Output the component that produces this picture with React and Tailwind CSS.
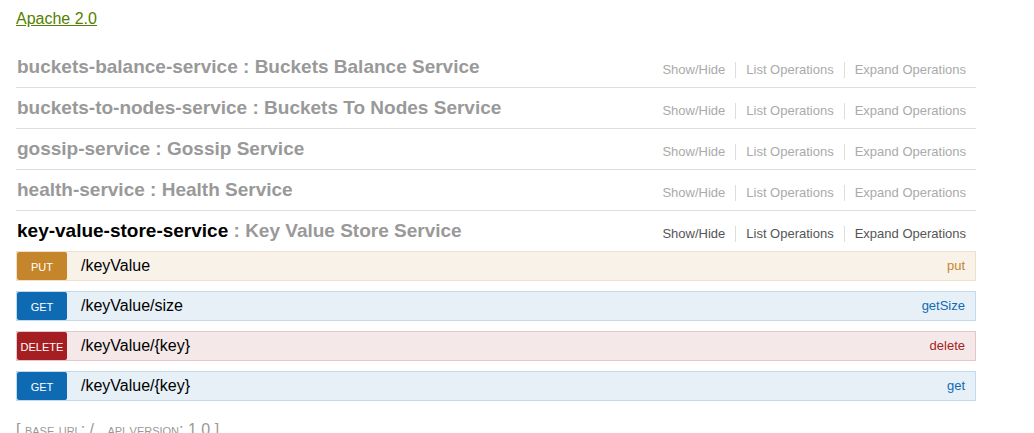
const services = [
  { name: "buckets-balance-service", title: "Buckets Balance Service" },
  { name: "buckets-to-nodes-service", title: "Buckets To Nodes Service" },
  { name: "gossip-service", title: "Gossip Service" },
  { name: "health-service", title: "Health Service" },
  {
    name: "key-value-store-service",
    title: "Key Value Store Service",
    operations: [
      { method: "PUT", path: "/keyValue", id: "put" },
      { method: "GET", path: "/keyValue/size", id: "getSize" },
      { method: "DELETE", path: "/keyValue/{key}", id: "delete" },
      { method: "GET", path: "/keyValue/{key}", id: "get" },
    ],
  },
];

const methodStyles = {
  PUT: { row: "border-[#f0e0ca] bg-[#f9f2e9]", badge: "bg-[#c5862b]", link: "text-[#c5862b]" },
  GET: { row: "border-[#c3d9ec] bg-[#e7f0f7]", badge: "bg-[#0f6ab4]", link: "text-[#0f6ab4]" },
  DELETE: { row: "border-[#e8c6c7] bg-[#f5e8e8]", badge: "bg-[#a41e22]", link: "text-[#a41e22]" },
};

const actions = ["Show/Hide", "List Operations", "Expand Operations"];

function Operation({ method, path, id }) {
  const styles = methodStyles[method];
  return (
    <li className={`flex h-[30px] items-center border ${styles.row}`}>
      <a
        href={`#${id}`}
        className={`flex h-7 w-[50px] shrink-0 items-center justify-center rounded-xs pt-[2px] text-[11px] text-white ${styles.badge}`}
      >
        {method}
      </a>
      <a href={`#${id}`} className="ml-[14px] text-base leading-7 text-black">
        {path}
      </a>
      <a href={`#${id}`} className={`ml-auto pr-[10px] text-[13px] ${styles.link}`}>
        {id}
      </a>
    </li>
  );
}

function Service({ name, title, operations }) {
  const active = Boolean(operations);
  return (
    <li>
      <div className={`flex justify-between ${active ? "h-10" : "h-[41px] border-b border-[#dddddd]"}`}>
        <h2 className="pt-2 pl-px text-[19px] leading-6 font-bold text-[#999999]">
          <a href={`#${name}`} className={active ? "text-black" : "text-[#999999]"}>
            {name}
          </a>{" "}
          : {title}
        </h2>
        <ul className="mt-[15px] flex h-4 divide-x divide-[#dddddd]">
          {actions.map((action) => (
            <li key={action} className="flex px-[10px]">
              <button
                type="button"
                className={`text-[13px] leading-4 ${active ? "text-[#555555]" : "text-[#aaaaaa]"}`}
              >
                {action}
              </button>
            </li>
          ))}
        </ul>
      </div>
      {active && (
        <ul className="flex flex-col gap-[10px]">
          {operations.map((op) => (
            <Operation key={op.method + op.path} {...op} />
          ))}
        </ul>
      )}
    </li>
  );
}

export default function App() {
  return (
    <div className="h-screen overflow-hidden bg-white px-4 font-['Liberation_Sans',Arial,sans-serif]">
      <main className="max-w-[960px]">
        <p className="pt-[7px] text-base leading-6">
          <a href="#license" className="text-[#547f00] underline">
            Apache 2.0
          </a>
        </p>
        <ul className="mt-4">
          {services.map((service) => (
            <Service key={service.name} {...service} />
          ))}
        </ul>
        <footer className="mt-[17px] text-base leading-6 text-[#999999]">
          [ <span className="[font-variant:small-caps]">base url:</span> / ,{" "}
          <span className="[font-variant:small-caps]">api version:</span> 1.0 ]
        </footer>
      </main>
    </div>
  );
}
